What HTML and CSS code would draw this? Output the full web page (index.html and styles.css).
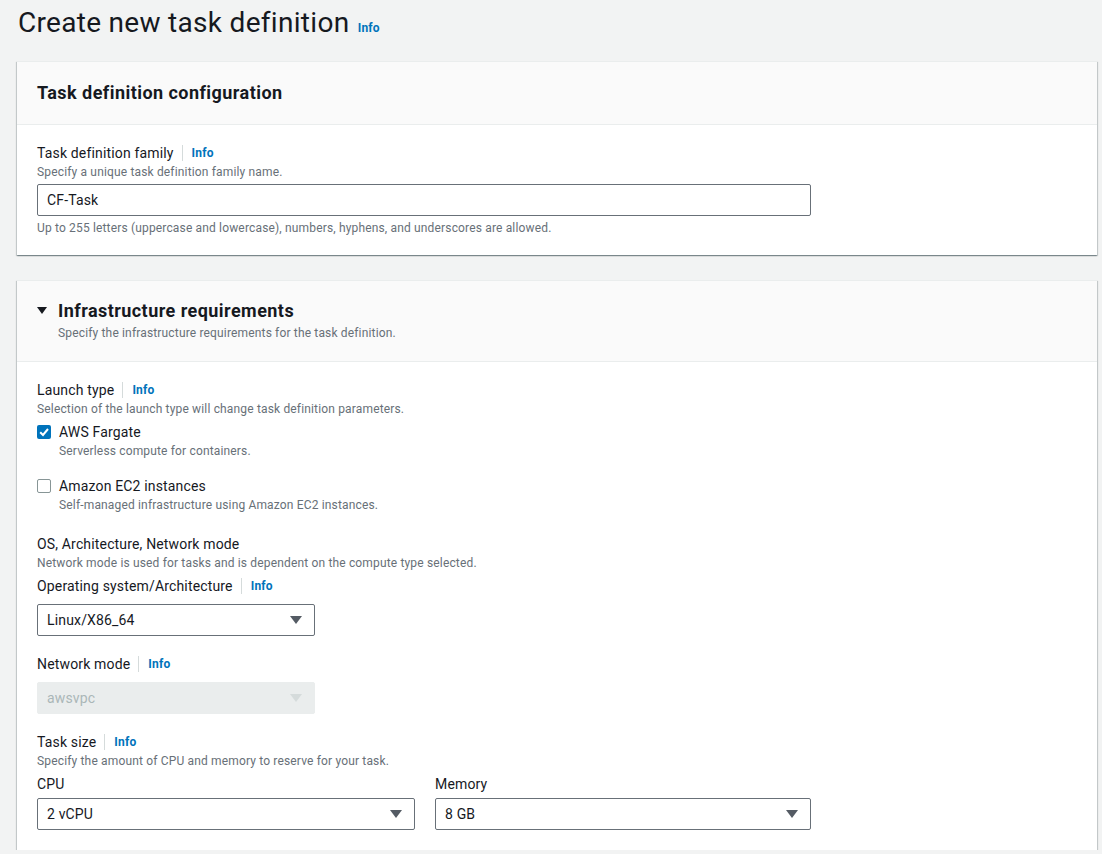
FILE: index.html
```html
<!DOCTYPE html>
<html>
<head>
<meta charset="utf-8">
<link rel="stylesheet" href="styles.css">
</head>
<body>
<div class="page">
  <h1 class="title">Create new task definition <a class="info info-title">Info</a></h1>

  <section class="card">
    <div class="card-header">
      <h2 class="card-heading">Task definition configuration</h2>
    </div>
    <div class="card-body card-body-1">
      <div class="form">
        <div class="label-row"><span class="label">Task definition family</span><a class="info">Info</a></div>
        <div class="desc">Specify a unique task definition family name.</div>
        <div class="input input-family">CF-Task</div>
        <div class="desc constraint">Up to 255 letters (uppercase and lowercase), numbers, hyphens, and underscores are allowed.</div>
      </div>
    </div>
  </section>

  <section class="card card-2">
    <div class="card-header card-header-2">
      <div class="expand-row">
        <span class="caret-down"><svg width="10" height="8" viewBox="0 0 10 8"><path d="M0 0 H10 L5 7 Z" fill="#16191f"/></svg></span>
        <h2 class="card-heading">Infrastructure requirements</h2>
      </div>
      <div class="desc header-desc">Specify the infrastructure requirements for the task definition.</div>
    </div>
    <div class="card-body">
      <div class="form">
        <div class="label-row"><span class="label">Launch type</span><a class="info">Info</a></div>
        <div class="desc">Selection of the launch type will change task definition parameters.</div>

        <div class="check-item first-check">
          <span class="checkbox checked"><svg width="14" height="14" viewBox="0 0 14 14"><path d="M3.2 7.2 L6 10 L11 4" fill="none" stroke="#fff" stroke-width="2"/></svg></span>
          <div class="check-text">
            <div class="check-label">AWS Fargate</div>
            <div class="desc">Serverless compute for containers.</div>
          </div>
        </div>
        <div class="check-item second-check">
          <span class="checkbox"></span>
          <div class="check-text">
            <div class="check-label">Amazon EC2 instances</div>
            <div class="desc">Self-managed infrastructure using Amazon EC2 instances.</div>
          </div>
        </div>

        <div class="group-title">OS, Architecture, Network mode</div>
        <div class="desc">Network mode is used for tasks and is dependent on the compute type selected.</div>
        <div class="label-row tight"><span class="label">Operating system/Architecture</span><a class="info">Info</a></div>
        <div class="select select-narrow"><span>Linux/X86_64</span><span class="sel-caret"><svg width="12" height="8" viewBox="0 0 12 8"><path d="M0 0 H12 L6 8 Z" fill="#545b64"/></svg></span></div>

        <div class="label-row spaced"><span class="label">Network mode</span><a class="info">Info</a></div>
        <div class="select select-narrow disabled"><span>awsvpc</span><span class="sel-caret"><svg width="12" height="8" viewBox="0 0 12 8"><path d="M0 0 H12 L6 8 Z" fill="#d5dbdb"/></svg></span></div>

        <div class="label-row spaced"><span class="label">Task size</span><a class="info">Info</a></div>
        <div class="desc">Specify the amount of CPU and memory to reserve for your task.</div>
        <div class="size-grid">
          <div class="size-col">
            <div class="label sub-label">CPU</div>
            <div class="select"><span>2 vCPU</span><span class="sel-caret"><svg width="12" height="8" viewBox="0 0 12 8"><path d="M0 0 H12 L6 8 Z" fill="#545b64"/></svg></span></div>
          </div>
          <div class="size-col">
            <div class="label sub-label">Memory</div>
            <div class="select"><span>8 GB</span><span class="sel-caret"><svg width="12" height="8" viewBox="0 0 12 8"><path d="M0 0 H12 L6 8 Z" fill="#545b64"/></svg></span></div>
          </div>
        </div>
      </div>
    </div>
  </section>
</div>
</body>
</html>
```
FILE: styles.css
```css
* { box-sizing: border-box; }
html, body { margin: 0; padding: 0; }
body {
  background: #f2f3f3;
  font-family: Roboto, "Liberation Sans", Arial, sans-serif;
  color: #16191f;
  font-size: 14px;
  line-height: 22px;
  letter-spacing: 0.16px;
}
.page {
  padding: 5px 5px 0 17px;
}
.title {
  margin: 0 0 0 1px;
  font-size: 28px;
  line-height: 36px;
  font-weight: 400;
  letter-spacing: 0.3px;
  color: #16191f;
  height: 56px;
}
.info {
  color: #0073bb;
  font-weight: 700;
  font-size: 12px;
  letter-spacing: 0.2px;
  text-decoration: none;
}
.info-title {
  margin-left: 1px;
  font-size: 12px;
}
.card {
  background: #fff;
  border-top: 1px solid #eaeded;
  box-shadow: 0 1px 1px 0 rgba(0,28,36,.3), 1px 1px 1px 0 rgba(0,28,36,.15), -1px 1px 1px 0 rgba(0,28,36,.15);
}
.card-2 { margin-top: 25px; }
.card-header {
  background: #fafafa;
  border-bottom: 1px solid #eaeded;
  padding: 20px 20px 20px;
}
.card-header-2 { padding: 19px 20px 20px; }
.card-heading {
  margin: 0;
  font-size: 18px;
  line-height: 22px;
  font-weight: 700;
  letter-spacing: 0.45px;
}
.expand-row {
  display: flex;
  align-items: center;
}
.caret-down {
  display: inline-flex;
  width: 21px;
  height: 22px;
  align-items: center;
}
.header-desc {
  margin-left: 21px;
  margin-top: 3px;
}
.card-body {
  padding: 17px 20px 20px;
}
.card-body-1 { padding-bottom: 19px; }
.form {
  max-width: 774px;
}
.label-row {
  display: flex;
  align-items: center;
}
.label {
  font-size: 14px;
  line-height: 22px;
}
.label-row .label {
  padding-right: 8px;
  border-right: 1px solid #d5dbdb;
  line-height: 16px;
  margin: 3px 0;
}
.label-row .info {
  padding-left: 9px;
}
.label-row.tight { margin-top: 4px; }
.label-row.spaced { margin-top: 17px; }
.desc {
  font-size: 12px;
  line-height: 16px;
  color: #687078;
}
.input {
  margin-top: 4px;
  height: 32px;
  border: 1px solid #687078;
  border-radius: 2px;
  padding: 0 9px;
  display: flex;
  align-items: center;
  font-size: 14px;
}
.constraint { margin-top: 4px; }
.check-item {
  display: flex;
  align-items: flex-start;
}
.first-check { margin-top: 4px; }
.second-check { margin-top: 16px; }
.checkbox {
  width: 14px;
  height: 14px;
  margin-top: 4px;
  border: 1.5px solid #879596;
  border-radius: 2px;
  flex: none;
  display: flex;
  background: #fff;
}
.checkbox.checked {
  background: #0073bb;
  border: none;
}
.check-text { margin-left: 8px; }
.check-label { font-size: 14px; line-height: 22px; }
.group-title {
  margin-top: 20px;
  font-size: 14px;
  line-height: 22px;
}
.select {
  margin-top: 7px;
  height: 32px;
  border: 1px solid #687078;
  border-radius: 2px;
  padding: 0 12px 0 9px;
  display: flex;
  align-items: center;
  justify-content: space-between;
  font-size: 14px;
}
.select-narrow { width: 278px; }
.select.disabled {
  background: #eaeded;
  border-color: #eaeded;
  color: #aab7b8;
}
.sel-caret { display: flex; }
.size-grid {
  margin-top: 4px;
  display: grid;
  grid-template-columns: 378px 376px;
  column-gap: 20px;
}
.sub-label { line-height: 22px; }
.size-col .select { margin-top: 3px; }
```
